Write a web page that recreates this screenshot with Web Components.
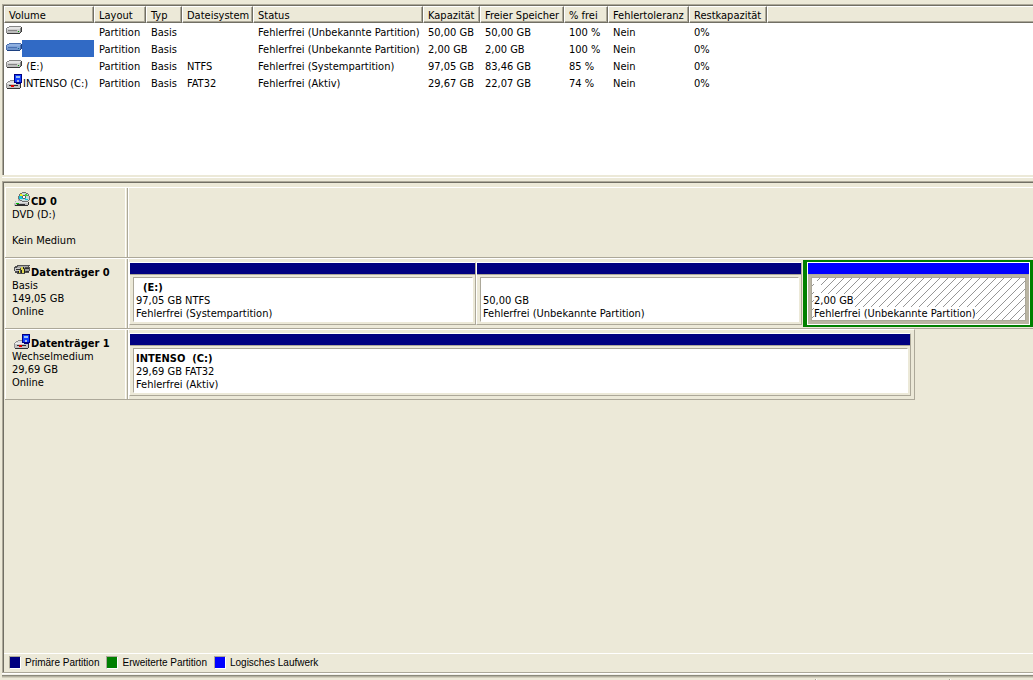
<!DOCTYPE html>
<html lang="de">
<head>
<meta charset="utf-8">
<title>Datenträgerverwaltung</title>
<style>
  :root {
    --face: #ece9d8;
    --shadow: #aca899;
    --dark: #716f64;
    --primary: #000080;
    --extended: #008000;
    --logical: #0000ff;
    --select: #316ac5;
  }
  * { box-sizing: border-box; }
  body {
    margin: 0;
    background: var(--face);
    color: #000;
    font: 11px/13px "DejaVu Sans Condensed", "DejaVu Sans", sans-serif;
  }
</style>
</head>
<body>
<disk-manager>
  <volume-list slot="volumes"></volume-list>

  <disk-row>
    <disk-label slot="label" icon="cd" name="CD 0">DVD (D:)<br><br>Kein Medium</disk-label>
  </disk-row>

  <disk-row>
    <disk-label slot="label" icon="disk" name="Datenträger 0">Basis<br>149,05 GB<br>Online</disk-label>
    <disk-partition style="--share: 345" name="  (E:)" size="97,05 GB NTFS" status="Fehlerfrei (Systempartition)"></disk-partition>
    <disk-partition style="--share: 324" size="50,00 GB" status="Fehlerfrei (Unbekannte Partition)"></disk-partition>
    <extended-partition style="--share: 223">
      <disk-partition class="logical" selected size="2,00 GB" status="Fehlerfrei (Unbekannte Partition)"></disk-partition>
    </extended-partition>
  </disk-row>

  <disk-row class="short" style="--used: 910; --free: 118">
    <disk-label slot="label" icon="removable" name="Datenträger 1">Wechselmedium<br>29,69 GB<br>Online</disk-label>
    <disk-partition name="INTENSO  (C:)" size="29,69 GB FAT32" status="Fehlerfrei (Aktiv)"></disk-partition>
  </disk-row>

  <disk-legend slot="legend"></disk-legend>
</disk-manager>

<script>
const define = (tag, html, setup) => {
  const template = document.createElement('template');
  template.innerHTML = '<style>*{box-sizing:border-box}</style>' + html;
  customElements.define(tag, class extends HTMLElement {
    constructor() {
      super();
      this.attachShadow({ mode: 'open' }).append(template.content.cloneNode(true));
    }
    connectedCallback() {
      if (setup) setup(this, this.shadowRoot);
    }
  });
};

/* ---------- icons ---------- */
const drive = (light, mid, front, edge, outline, led) => `
    <path fill="${edge}" d="M3 3h12v1H3zM1 4h2v1H1zM0 5h1v5H0z"/>
    <path fill="${light}" d="M3 4h12v1h-1v1H1V5h2z"/>
    <path fill="${mid}" d="M1 6h13v2H1z"/>
    <path fill="${front}" d="M1 8h13v2H1z"/>
    <path fill="${edge}" d="M2 7h9v1H2zM14 5h1v4h-1z"/>
    <path fill="${outline}" d="M15 4h1v5h-1v1h-1v1H1v-1h13V9h1z"/>
    <path fill="${led}" d="M12 8h1v1h-1z"/>`;
const ICONS = {
  drive: drive('#e4e4e4', '#cfcfcf', '#bdbdbd', '#868686', '#3c3c3c', '#00a000'),
  selected: drive('#8fb0e0', '#7fa3d8', '#6f94cc', '#4a70b0', '#1c4080', '#107088'),
  removable: `
    <path fill="#909090" d="M4 6h5v1H4zM2 7h2v1H2zM1 8h1v1H1zM0 9h1v5H0z"/>
    <path fill="#dcdcdc" d="M4 7h9v2H2V8h2z"/>
    <path fill="#c4c4c4" d="M1 9h13v5H1z"/>
    <path fill="#f0f0f0" d="M1 9h12v1H1z"/>
    <path fill="#303030" d="M14 9h1v5h-1v1H1v-1h13zM3 11h9v1H3z"/>
    <path fill="#e00000" d="M5 11h3v2H5z"/>
    <path fill="#000080" d="M8 0h8v9h-1v1h-5V9H8z"/>
    <path fill="#1040ff" d="M9 1h6v7H9z"/>
    <path fill="#9cc0f0" d="M10 2h4v2h-4z"/>
    <path fill="#a8b8e8" d="M11 6h2v2h-2z"/>`,
  cd: `
    <path fill="#b0b0b0" d="M4 7h9v3H1V9h3z"/>
    <path fill="#e0e0e0" d="M2 9h11v2H1v-1h1z"/>
    <path fill="#c0c0c0" d="M0 11h14v3H0z"/>
    <path fill="#303030" d="M14 10h1v3h-1v1H1v-1h13zM3 12h8v1H3z"/>
    <path fill="#00c000" d="M2 11h3v1H2z"/>
    <path fill="#707070" d="M8 0h4v1H8zM6 1h2v1H6zM12 1h2v1h-2zM5 2h1v2H5zM14 2h1v2h-1zM4 4h1v3H4zM15 4h1v4h-1zM14 8h1v1h-1zM5 7h1v1H5zM6 8h2v1H6zM12 9h2v1h-2zM8 9h4v1H8z"/>
    <path fill="#c4dcd8" d="M8 1h4v1h2v2h1v4h-1v1H8V8H6V7H5V4h1V2h2z"/>
    <path fill="#f4e820" d="M6 2h2v1h1v2H8V4H6z"/>
    <path fill="#10c8e0" d="M5 4h3v1h1v2H5zM11 6h1v1h2v1h-3z"/>
    <path fill="#40d040" d="M11 2h2v1h1v1h-2v1h-1z"/>
    <path fill="#fff" d="M9 4h2v2H9z"/>
    <path fill="#606060" d="M9 3h2v1H9zM8 4h1v2H8zM11 4h1v2h-1zM9 6h2v1H9z"/>`,
  disk: `
    <path fill="#505050" d="M3 2h13v1h-1v1h1v4h-1v2h-4v1H3v-1H1V8H0V4h1V3h2z"/>
    <path fill="#a8a8a8" d="M4 3h10v1h-3v1H3V4h1z"/>
    <path fill="#c8c8c8" d="M1 5h5v3H1z"/>
    <path fill="#303030" d="M2 6h5v1H2zM11 5h4v1h-4zM12 8h3v1h-3z"/>
    <path fill="#989898" d="M11 6h4v2h-4z"/>
    <path fill="#e0d850" d="M7 4h2v2h1v4H8V7H7zM5 7h1v3H5z"/>
    <path fill="#202020" d="M9 4h1v2H9zM10 6h1v4h-1zM7 7h1v3H7zM4 8h1v2H4z"/>`
};

define('disk-icon', `
  <style>
    :host { display: inline-block; width: 16px; height: 16px; flex: none; }
    svg { display: block; width: 16px; height: 16px; shape-rendering: crispEdges; }
  </style>
  <svg viewBox="0 0 16 16" aria-hidden="true"></svg>`,
  (host, root) => { root.querySelector('svg').innerHTML = ICONS[host.getAttribute('type')] || ''; });

/* ---------- window frame: list above, disks and legend below ---------- */
define('disk-manager', `
  <style>
    :host { display: flex; flex-direction: column; min-height: 100vh; padding: 4px 0 0 2px; }
    .pane { border-left: 1px solid var(--shadow); }
    .pane > div { border-left: 1px solid var(--dark); }
    .top { border-top: 1px solid var(--shadow); }
    .top > div { border-top: 1px solid var(--dark); height: 170px; background: #fff; }
    .splitter { height: 6px; border-top: 2px solid var(--face); background: linear-gradient(#fff 1px, var(--face) 1px); }
    .bottom { flex: 1; display: flex; border-top: 1px solid var(--shadow); border-bottom: 1px solid var(--shadow); }
    .bottom > div { flex: 1; min-width: 0; display: flex; flex-direction: column; border-top: 1px solid var(--dark); }
    .disks { flex: 1; padding: 4px 0 0 1px; }
    footer {
      height: 7px;
      background:
        linear-gradient(90deg, var(--shadow) 1px, #fff 1px) 79% 6px / 2px 1px no-repeat,
        linear-gradient(90deg, var(--shadow) 1px, #fff 1px) 92% 6px / 2px 1px no-repeat,
        linear-gradient(#fff 1px, #f4f2e8 1px 2px, #8b897c 2px 3px, #b4b1a0 3px 4px, #d2cfbd 4px 5px, var(--face) 5px);
    }
  </style>
  <div class="pane top"><div><slot name="volumes"></slot></div></div>
  <div class="splitter"></div>
  <div class="pane bottom"><div>
    <div class="disks"><slot></slot></div>
    <slot name="legend"></slot>
  </div></div>
  <footer></footer>`);

/* ---------- volume table ---------- */
const COLUMNS = [['Volume', 90], ['Layout', 52], ['Typ', 36], ['Dateisystem', 71], ['Status', 170],
  ['Kapazität', 57], ['Freier Speicher', 84], ['% frei', 44], ['Fehlertoleranz', 81], ['Restkapazität', 78]];
const VOLUMES = [
  ['drive', '', 'Partition', 'Basis', '', 'Fehlerfrei (Unbekannte Partition)', '50,00 GB', '50,00 GB', '100 %', 'Nein', '0%'],
  ['selected', '', 'Partition', 'Basis', '', 'Fehlerfrei (Unbekannte Partition)', '2,00 GB', '2,00 GB', '100 %', 'Nein', '0%'],
  ['drive', ' (E:)', 'Partition', 'Basis', 'NTFS', 'Fehlerfrei (Systempartition)', '97,05 GB', '83,46 GB', '85 %', 'Nein', '0%'],
  ['removable', 'INTENSO (C:)', 'Partition', 'Basis', 'FAT32', 'Fehlerfrei (Aktiv)', '29,67 GB', '22,07 GB', '74 %', 'Nein', '0%']
];

define('volume-list', `
  <style>
    :host { display: block; }
    table { width: 100%; table-layout: fixed; border-collapse: separate; border-spacing: 0; }
    th, td { height: 17px; padding: 2px 0 0 5px; text-align: left; font-weight: 400; line-height: 13px; white-space: nowrap; }
    th {
      background: var(--face);
      border-top: 1px solid #fff; border-left: 1px solid #fff; border-bottom: 1px solid var(--dark);
      border-right: 1px solid var(--dark);
      box-shadow: inset -1px -1px var(--shadow);
      padding-left: 4px;
    }
    th:last-child { border-right: 0; box-shadow: inset 0 -1px var(--shadow); }
    td:first-child { padding: 0 0 0 2px; }
    .volume { display: flex; height: 17px; }
    .name { flex: 1; padding: 3px 0 0 1px; white-space: pre; }
    .selected .name { background: var(--select); }
  </style>
  <table>
    <colgroup></colgroup>
    <thead><tr></tr></thead>
    <tbody></tbody>
  </table>`,
  (host, root) => {
    root.querySelector('colgroup').innerHTML = COLUMNS.map(([, w]) => `<col style="width:${w}px">`).join('') + '<col>';
    root.querySelector('thead tr').innerHTML = COLUMNS.map(([t]) => `<th scope="col">${t}</th>`).join('') + '<th></th>';
    root.querySelector('tbody').innerHTML = VOLUMES.map(([icon, name, ...rest]) => `
      <tr class="${icon}"><td><div class="volume"><disk-icon type="${icon}"></disk-icon><span class="name">${name}</span></div></td>
      ${rest.map(t => `<td>${t}</td>`).join('')}<td></td></tr>`).join('');
  });

/* ---------- disks ---------- */
define('disk-row', `
  <style>
    :host { display: flex; height: 71px; border-top: 1px solid #fff; border-bottom: 1px solid var(--shadow); }
    :host(.short) { width: calc(100% * var(--used) / (var(--used) + var(--free))); border-right: 1px solid var(--shadow); }
    .parts { flex: 1; min-width: 0; display: flex; padding: 3px 0; border-left: 1px solid #fff; }
    :host(.short) .parts { padding-right: 3px; }
  </style>
  <slot name="label"></slot>
  <div class="parts"><slot></slot></div>`);

define('disk-label', `
  <style>
    :host { display: block; flex: none; width: 123px; padding: 4px 0 0 6px; border-left: 1px solid #fff; border-right: 1px solid var(--shadow); box-shadow: inset -1px 0 var(--face), inset -2px 0 #fff; }
    .head { display: flex; gap: 1px; height: 16px; padding-left: 2px; }
    .head b { padding-top: 3px; white-space: nowrap; }
  </style>
  <div class="head"><disk-icon></disk-icon><b></b></div>
  <slot></slot>`,
  (host, root) => {
    const icon = document.createElement('disk-icon');
    icon.setAttribute('type', host.getAttribute('icon'));
    root.querySelector('disk-icon').replaceWith(icon);
    root.querySelector('b').textContent = host.getAttribute('name');
  });

define('disk-partition', `
  <style>
    :host { flex: var(--share, 1) 1 0; min-width: 0; display: flex; flex-direction: column; border-top: 1px solid #fff; border-left: 1px solid #fff; border-right: 1px solid var(--shadow); border-bottom: 1px solid var(--shadow); }
    .bar { height: 11px; background: var(--primary); }
    :host(.logical) .bar { background: var(--logical); }
    .body { flex: 1; display: flex; padding: 2px 2px 2px 3px; border-top: 1px solid var(--shadow); }
    .box { flex: 1; min-width: 0; padding: 3px 2px 0; white-space: pre; background: #fff; border: 1px solid #fff; border-top-color: var(--shadow); border-left-color: var(--shadow); }
    .box div { height: 13px; }
    :host([selected]) { border-bottom-color: #fff; border-right-color: #fff; }
    :host([selected]) .body { background: #bab5a3; padding: 2px 3px 3px; }
    :host([selected]) .box {
      border-color: var(--shadow);
      background: #fff url("data:image/svg+xml,%3Csvg xmlns='http://www.w3.org/2000/svg' width='8' height='8' shape-rendering='crispEdges'%3E%3Cpath fill='%23969696' d='M7 0h1v1h-1zM6 1h1v1h-1zM5 2h1v1h-1zM4 3h1v1h-1zM3 4h1v1h-1zM2 5h1v1h-1zM1 6h1v1h-1zM0 7h1v1h-1z'/%3E%3C/svg%3E");
    }
    :host([selected]) span { display: inline-block; background: #fff; min-width: 7px; height: 13px; }
  </style>
  <div class="bar"></div>
  <div class="body"><div class="box"><div><b><span></span></b></div><div><span></span></div><div><span></span></div></div></div>`,
  (host, root) => {
    const spans = root.querySelectorAll('span');
    ['name', 'size', 'status'].forEach((key, i) => { spans[i].textContent = host.getAttribute(key) || ''; });
  });

define('extended-partition', `
  <style>
    :host { flex: var(--share, 1) 1 0; min-width: 0; display: flex; margin: -2px 0 -2px 1px; border: 2px solid var(--extended); border-left-width: 4px; border-right-width: 3px; }
  </style>
  <slot></slot>`);

/* ---------- legend ---------- */
define('disk-legend', `
  <style>
    :host { display: block; border-top: 1px solid #fff; font: 10px/13px "Liberation Sans", Arial, sans-serif; }
    ul { display: flex; gap: 7px; height: 18px; margin: 0; padding: 2px 5px; list-style: none; }
    li { display: flex; gap: 4px; white-space: nowrap; }
    i { width: 12px; height: 13px; border: 1px solid #fff; border-top-color: var(--shadow); border-left-color: var(--shadow); }
    .primary { background: var(--primary); }
    .extended { background: var(--extended); }
    .logical { background: var(--logical); }
  </style>
  <ul>
    <li><i class="primary"></i>Primäre Partition</li>
    <li><i class="extended"></i>Erweiterte Partition</li>
    <li><i class="logical"></i>Logisches Laufwerk</li>
  </ul>`);
</script>
</body>
</html>
